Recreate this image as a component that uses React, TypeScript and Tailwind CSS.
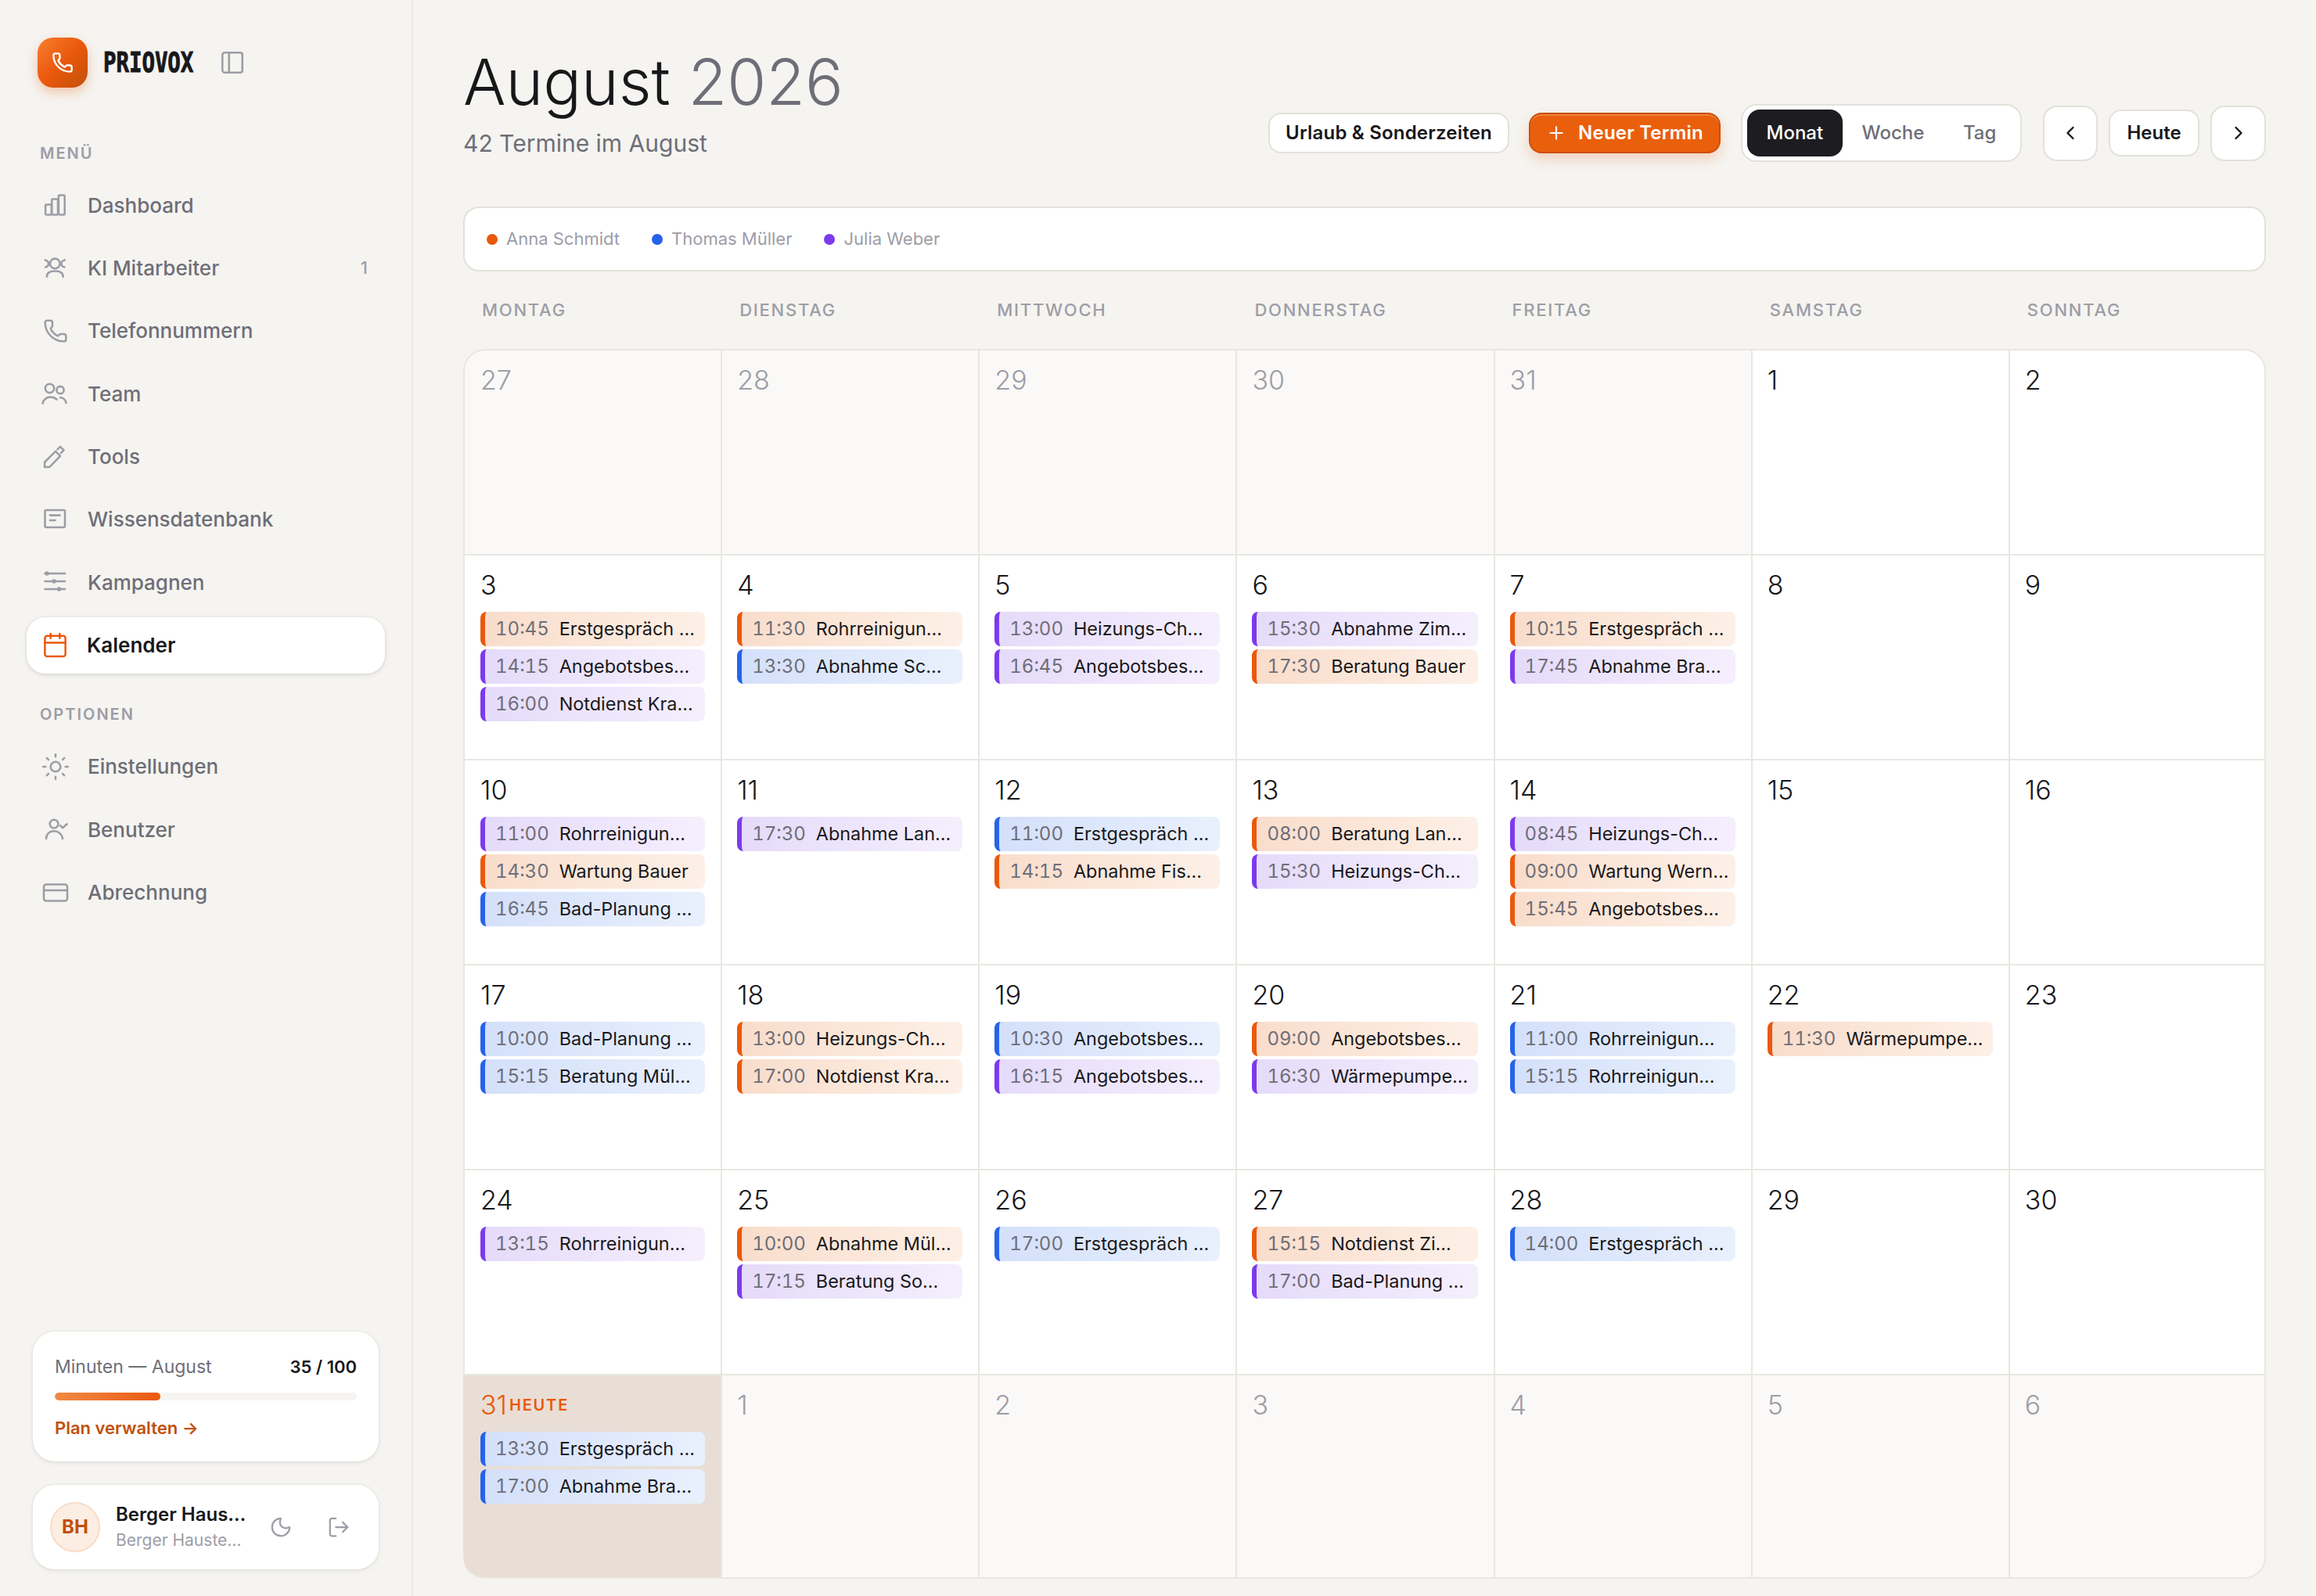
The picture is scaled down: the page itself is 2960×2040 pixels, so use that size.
import { Phone, PanelLeft, Calendar, Moon, LogOut, Plus, ChevronLeft, ChevronRight, Sun, CreditCard } from "lucide-react";

type Tone = "o" | "b" | "p";
type Ev = [string, string, Tone];

const tones: Record<Tone, string> = {
  o: "border-[#ea580c] from-[#f9ddcb] to-[#fdf0e7]",
  b: "border-[#2563eb] from-[#d4e0fa] to-[#e9f0fd]",
  p: "border-[#7c3aed] from-[#e5dbfa] to-[#f5effd]",
};

const weekdays = ["Montag", "Dienstag", "Mittwoch", "Donnerstag", "Freitag", "Samstag", "Sonntag"];

const days: { n: number; muted?: boolean; today?: boolean; ev?: Ev[] }[] = [
  { n: 27, muted: true }, { n: 28, muted: true }, { n: 29, muted: true }, { n: 30, muted: true }, { n: 31, muted: true }, { n: 1 }, { n: 2 },
  { n: 3, ev: [["10:45", "Erstgespräch …", "o"], ["14:15", "Angebotsbes…", "p"], ["16:00", "Notdienst Kra…", "p"]] },
  { n: 4, ev: [["11:30", "Rohrreinigun…", "o"], ["13:30", "Abnahme Sc…", "b"]] },
  { n: 5, ev: [["13:00", "Heizungs-Ch…", "p"], ["16:45", "Angebotsbes…", "p"]] },
  { n: 6, ev: [["15:30", "Abnahme Zim…", "p"], ["17:30", "Beratung Bauer", "o"]] },
  { n: 7, ev: [["10:15", "Erstgespräch …", "o"], ["17:45", "Abnahme Bra…", "p"]] },
  { n: 8 }, { n: 9 },
  { n: 10, ev: [["11:00", "Rohrreinigun…", "p"], ["14:30", "Wartung Bauer", "o"], ["16:45", "Bad-Planung …", "b"]] },
  { n: 11, ev: [["17:30", "Abnahme Lan…", "p"]] },
  { n: 12, ev: [["11:00", "Erstgespräch …", "b"], ["14:15", "Abnahme Fis…", "o"]] },
  { n: 13, ev: [["08:00", "Beratung Lan…", "o"], ["15:30", "Heizungs-Ch…", "p"]] },
  { n: 14, ev: [["08:45", "Heizungs-Ch…", "p"], ["09:00", "Wartung Wern…", "o"], ["15:45", "Angebotsbes…", "o"]] },
  { n: 15 }, { n: 16 },
  { n: 17, ev: [["10:00", "Bad-Planung …", "b"], ["15:15", "Beratung Mül…", "b"]] },
  { n: 18, ev: [["13:00", "Heizungs-Ch…", "o"], ["17:00", "Notdienst Kra…", "o"]] },
  { n: 19, ev: [["10:30", "Angebotsbes…", "b"], ["16:15", "Angebotsbes…", "p"]] },
  { n: 20, ev: [["09:00", "Angebotsbes…", "o"], ["16:30", "Wärmepumpe…", "p"]] },
  { n: 21, ev: [["11:00", "Rohrreinigun…", "b"], ["15:15", "Rohrreinigun…", "b"]] },
  { n: 22, ev: [["11:30", "Wärmepumpe…", "o"]] },
  { n: 23 },
  { n: 24, ev: [["13:15", "Rohrreinigun…", "p"]] },
  { n: 25, ev: [["10:00", "Abnahme Mül…", "o"], ["17:15", "Beratung So…", "p"]] },
  { n: 26, ev: [["17:00", "Erstgespräch …", "b"]] },
  { n: 27, ev: [["15:15", "Notdienst Zi…", "o"], ["17:00", "Bad-Planung …", "p"]] },
  { n: 28, ev: [["14:00", "Erstgespräch …", "b"]] },
  { n: 29 }, { n: 30 },
  { n: 31, today: true, ev: [["13:30", "Erstgespräch …", "b"], ["17:00", "Abnahme Bra…", "b"]] },
  { n: 1, muted: true }, { n: 2, muted: true }, { n: 3, muted: true }, { n: 4, muted: true }, { n: 5, muted: true }, { n: 6, muted: true },
];

function Glyph({ children }: { children: React.ReactNode }) {
  return (
    <svg width="36" height="36" viewBox="0 0 24 24" fill="none" stroke="#9d9da7" strokeWidth="1.7" strokeLinecap="round" strokeLinejoin="round" className="shrink-0">
      {children}
    </svg>
  );
}

const nav = [
  {
    label: "Dashboard",
    icon: (
      <Glyph>
        <rect x="3.4" y="11.7" width="5.2" height="8.6" rx="0.8" />
        <rect x="8.8" y="7" width="5.2" height="13.3" rx="0.8" />
        <rect x="14.6" y="3.7" width="5.2" height="16.6" rx="0.8" />
      </Glyph>
    ),
  },
  {
    label: "KI Mitarbeiter",
    badge: "1",
    icon: (
      <Glyph>
        <circle cx="11.5" cy="8.6" r="4.2" />
        <path d="M4.6 19.8C4.6 16.4 7.6 15 11.5 15s6.9 1.4 6.9 4.8" />
        <path d="M3.2 5.6c1.8.3 2.8 1.5 2.8 3s-1 2.7-2.6 3" />
        <path d="M19.8 5.6c-1.8.3-2.8 1.5-2.8 3s1 2.7 2.6 3" />
      </Glyph>
    ),
  },
  { label: "Telefonnummern", icon: <Phone size={32} strokeWidth={1.9} color="#9d9da7" className="mx-[2px] shrink-0" /> },
  {
    label: "Team",
    icon: (
      <Glyph>
        <circle cx="7" cy="7.6" r="3.8" />
        <circle cx="16" cy="9" r="3.1" />
        <path d="M1 20.5C1.5 17 4.5 15 7.5 15c2.3 0 4.3.8 5.5 2" />
        <path d="M16 15.5c2.5 0 4.5 2 5 4.5" />
      </Glyph>
    ),
  },
  {
    label: "Tools",
    icon: (
      <Glyph>
        <path d="M2.7 20.7v-4.2l9.3-9.3 4 4-9.2 9.5z" />
        <path d="m13.6 5.6 2.4-2.3 3 3-2.4 2.4" />
      </Glyph>
    ),
  },
  {
    label: "Wissensdatenbank",
    icon: (
      <Glyph>
        <rect x="3" y="4" width="17" height="14.7" rx="1" />
        <path d="M7.3 8.4h8.4M7.3 12.7h4.4" />
      </Glyph>
    ),
  },
  {
    label: "Kampagnen",
    icon: (
      <Glyph>
        <path d="M3 4.7h17M3 11.3h17M3 18h17" />
        <circle cx="4.7" cy="4.7" r="1" fill="#9d9da7" />
        <circle cx="10.7" cy="11.3" r="1" fill="#9d9da7" />
        <circle cx="15" cy="18" r="1" fill="#9d9da7" />
      </Glyph>
    ),
  },
  { label: "Kalender", active: true, icon: <Calendar size={35} strokeWidth={1.7} color="#ea580c" className="shrink-0" /> },
];

const options = [
  { label: "Einstellungen", icon: <Sun size={38} strokeWidth={1.6} color="#9d9da7" className="-mx-[1px] shrink-0" /> },
  {
    label: "Benutzer",
    icon: (
      <Glyph>
        <circle cx="10.7" cy="7.4" r="3.6" />
        <path d="M4 20c0-4 3-6.5 6.7-6.5 3.7 0 6.8 2.5 7.3 6.5" />
        <path d="m16 8.8 2 2 3.7-3.3" />
      </Glyph>
    ),
  },
  { label: "Abrechnung", icon: <CreditCard size={36} strokeWidth={1.7} color="#9d9da7" className="shrink-0" /> },
];

function NavRow({ item }: { item: { label: string; badge?: string; active?: boolean; icon: React.ReactNode } }) {
  return (
    <div
      className={`flex h-[72px] items-center gap-[23px] rounded-[24px] pl-[19px] pr-[22px] text-[26px] ${
        item.active
          ? "bg-white font-semibold text-[#18181b] shadow-[0_2px_6px_rgba(0,0,0,0.1),0_0_0_2px_rgba(0,0,0,0.02)]"
          : "font-medium text-[#6e6e78]"
      }`}
    >
      {item.icon}
      <span className="flex-1">{item.label}</span>
      {item.badge && <span className="text-[22px] text-[#9d9da7]">{item.badge}</span>}
    </div>
  );
}

function Sidebar() {
  return (
    <aside className="flex h-full w-[528px] shrink-0 flex-col border-r-2 border-[#ebe9e4] px-[34px] pt-[48px] pb-[34px]">
      <div className="flex items-center pl-[14px]">
        <div className="flex h-[64px] w-[64px] items-center justify-center rounded-[20px] bg-gradient-to-br from-[#f97d2c] via-[#ea580c] to-[#c2500a] shadow-[0_6px_14px_rgba(234,88,12,0.3)]">
          <Phone size={28} strokeWidth={2} color="#fff" />
        </div>
        <span className="ml-[20px] w-[115px] origin-left scale-x-[0.76] font-['DejaVu_Sans_Mono',monospace] text-[36px] font-bold leading-none text-[#18181b] [-webkit-text-stroke:1px_#18181b]">PRIOVOX</span>
        <PanelLeft size={34} strokeWidth={1.8} color="#9d9da7" className="ml-[33px]" />
      </div>

      <div className="mt-[69px] pl-[17px] text-[20px] font-semibold tracking-[2px] text-[#9d9da7]">MENÜ</div>
      <div className="mt-[15px] flex flex-col gap-[8.4px]">
        {nav.map((item) => (
          <NavRow key={item.label} item={item} />
        ))}
      </div>

      <div className="mt-[37px] pl-[17px] text-[20px] font-semibold tracking-[2px] text-[#9d9da7]">OPTIONEN</div>
      <div className="mt-[16px] flex flex-col gap-[8.4px]">
        {options.map((item) => (
          <NavRow key={item.label} item={item} />
        ))}
      </div>

      <div className="mt-auto flex flex-col gap-[30px] px-[8px]">
        <div className="h-[166px] rounded-[28px] bg-white px-[28px] pt-[30px] shadow-[0_2px_6px_rgba(0,0,0,0.07),0_0_0_2px_rgba(0,0,0,0.02)]">
          <div className="flex items-center justify-between leading-[30px]">
            <span className="text-[23px] font-normal text-[#6e6e78]">Minuten — August</span>
            <span className="text-[22px] font-semibold text-[#18181b]">35 / 100</span>
          </div>
          <div className="mt-[18px] h-[10px] overflow-hidden rounded-full bg-[#f5f4f0]">
            <div className="h-full rounded-full bg-gradient-to-r from-[#f08a42] to-[#ea580c]" style={{ width: "35%" }} />
          </div>
          <div className="mt-[20px] text-[22px] font-semibold leading-[30px] text-[#c2500a]">Plan verwalten →</div>
        </div>
        <div className="flex h-[108px] items-center rounded-[28px] bg-white pl-[22px] pr-[36px] shadow-[0_2px_6px_rgba(0,0,0,0.07),0_0_0_2px_rgba(0,0,0,0.02)]">
          <div className="flex h-[64px] w-[64px] shrink-0 items-center justify-center rounded-full border-2 border-[#f8dcc8] bg-[#fdeee3] text-[24px] font-bold text-[#c2500a]">BH</div>
          <div className="mb-[3px] ml-[20px] min-w-0 whitespace-nowrap">
            <div className="text-[24px] font-semibold leading-[36px] text-[#18181b]">Berger Haus…</div>
            <div className="text-[21px] leading-[30px] text-[#9d9da7]">Berger Hauste…</div>
          </div>
          <Moon size={30} strokeWidth={1.8} color="#9d9da7" className="ml-auto" />
          <LogOut size={30} strokeWidth={1.8} color="#9d9da7" className="ml-[44px]" />
        </div>
      </div>
    </aside>
  );
}

function Toolbar() {
  const card = "border-2 border-[#e2e1db] bg-white";
  return (
    <div className="mt-[73px] flex items-center">
      <button className={`h-[52px] w-[308px] rounded-[16px] text-[24px] font-semibold tracking-[0.2px] text-[#18181b] ${card}`}>Urlaub &amp; Sonderzeiten</button>
      <button className="ml-[25px] flex h-[52px] w-[245px] items-center justify-center gap-[15px] rounded-[16px] border-2 border-[#c9500f] bg-[#ea5f0c] text-[24px] font-semibold tracking-[0.2px] text-white shadow-[0_8px_16px_rgba(234,88,12,0.22),inset_0_2px_0_rgba(255,255,255,0.2)]">
        <Plus size={26} strokeWidth={2} />
        Neuer Termin
      </button>
      <div className={`ml-[26px] flex h-[74px] w-[359px] items-center rounded-[20px] px-[6px] ${card}`}>
        <span className="flex h-[60px] w-[122px] items-center justify-center rounded-[16px] bg-[#1c1c21] text-[24px] font-medium text-white">Monat</span>
        <span className="flex h-[60px] w-[130px] items-center justify-center text-[24px] font-medium text-[#6e6e78]">Woche</span>
        <span className="flex h-[60px] w-[92px] items-center justify-center text-[24px] font-medium text-[#6e6e78]">Tag</span>
      </div>
      <button className={`ml-[27px] flex h-[71px] w-[70px] items-center justify-center rounded-[18px] text-[#18181b] ${card}`}>
        <ChevronLeft size={28} strokeWidth={2} />
      </button>
      <button className={`ml-[14px] h-[60px] w-[116px] rounded-[16px] text-[24px] font-semibold text-[#18181b] ${card}`}>Heute</button>
      <button className={`ml-[14px] flex h-[71px] w-[71px] items-center justify-center rounded-[18px] text-[#18181b] ${card}`}>
        <ChevronRight size={28} strokeWidth={2} />
      </button>
    </div>
  );
}

function EventChip({ ev }: { ev: Ev }) {
  return (
    <div className={`flex h-[44px] items-center gap-[13px] rounded-[8px] border-l-[6px] bg-gradient-to-r pl-[13px] pr-[13px] ${tones[ev[2]]}`}>
      <span className="shrink-0 text-[24px] tabular-nums text-[#6e6e78]">{ev[0]}</span>
      <span className="min-w-0 whitespace-nowrap text-[23.4px] text-[#18181b]">{ev[1]}</span>
    </div>
  );
}

function DayCell({ day, index }: { day: (typeof days)[number]; index: number }) {
  const bg = day.today ? "bg-[#e9ded5] border-l-[#e9ded5]" : day.muted ? "bg-[#faf9f7]" : "bg-white";
  const left = index % 7 === 0 ? "pl-[20px]" : "pl-[19px]";
  const right = index % 7 === 6 ? "border-r-2" : "";
  const bottom = index >= 35 ? "border-b-2" : "";
  const corner =
    index === 0 ? "rounded-tl-[28px]" : index === 6 ? "rounded-tr-[28px]" : index === 35 ? "rounded-bl-[28px]" : index === 41 ? "rounded-br-[28px]" : "";
  const color = day.today ? "text-[#ea580c]" : day.muted ? "text-[#9d9da7]" : "text-[#18181b]";
  return (
    <div className={`min-w-0 border-t-2 border-l-2 border-[#e8e7e2] pr-[20px] pt-[18px] ${left} ${bg} ${right} ${bottom} ${corner}`}>
      <div className="flex h-[40px] items-center">
        <span className={`text-[34px] font-light leading-[40px] ${color}`}>{day.n}</span>
        {day.today && <span className="ml-[3px] text-[20px] font-semibold tracking-[1.8px] text-[#ea580c]">HEUTE</span>}
      </div>
      <div className="mt-[14px] flex flex-col gap-[4px]">
        {day.ev?.map((ev) => (
          <EventChip key={ev[0] + ev[1]} ev={ev} />
        ))}
      </div>
    </div>
  );
}

export default function App() {
  return (
    <div className="flex h-[2040px] w-[2960px] overflow-hidden bg-[#f5f4f0] font-['Inter',sans-serif]">
      <Sidebar />
      <main className="min-w-0 flex-1 px-[64px] pt-[60px]">
        <div className="flex items-start justify-between">
          <div>
            <h1 className="text-[81px] font-light leading-[90px] text-[#18181b]">
              August <span className="text-[#6e6e78]">2026</span>
            </h1>
            <p className="mt-[13px] text-[30px] font-normal leading-[40px] text-[#6e6e78]">42 Termine im August</p>
          </div>
          <Toolbar />
        </div>

        <div className="mt-[57px] flex h-[83px] items-center gap-[41px] rounded-[20px] border-2 border-[#e2e1db] bg-white pl-[28px] text-[22px] text-[#9d9da7]">
          <span className="flex items-center gap-[11px]"><i className="h-[14px] w-[14px] rounded-full bg-[#ea580c]" />Anna Schmidt</span>
          <span className="flex items-center gap-[11px]"><i className="h-[14px] w-[14px] rounded-full bg-[#2563eb]" />Thomas Müller</span>
          <span className="flex items-center gap-[11px]"><i className="h-[14px] w-[14px] rounded-full bg-[#7c3aed]" />Julia Weber</span>
        </div>

        <div className="grid grid-cols-7 pt-[36px] pb-[37px]">
          {weekdays.map((d) => (
            <div key={d} className="pl-[24px] text-[22px] font-medium uppercase leading-[26px] tracking-[1.76px] text-[#9d9da7]">{d}</div>
          ))}
        </div>

        <div className="grid grid-cols-7 grid-rows-[repeat(6,262px)]">
          {days.map((day, i) => (
            <DayCell key={i} day={day} index={i} />
          ))}
        </div>
      </main>
    </div>
  );
}
